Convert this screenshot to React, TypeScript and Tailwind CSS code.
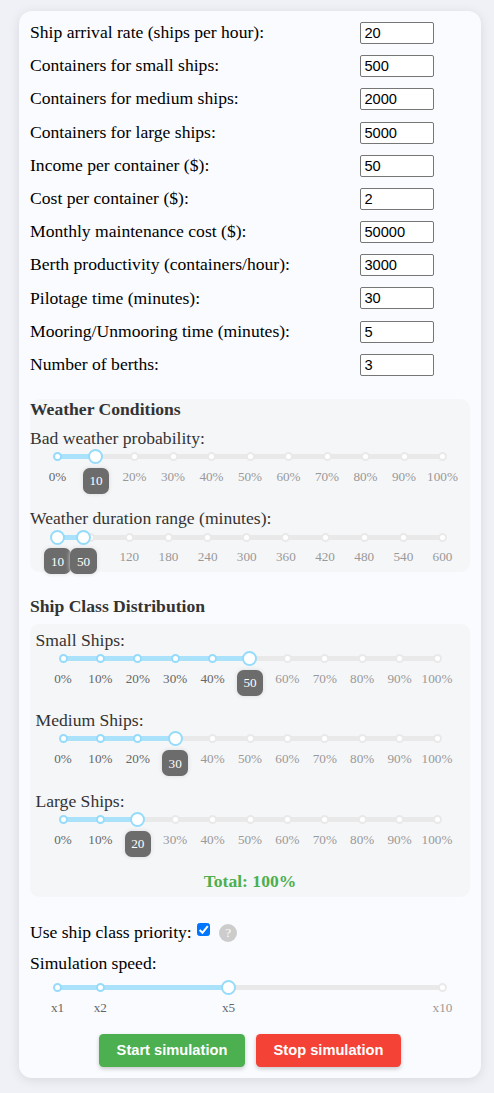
import React, { useState } from "react";

type Mark = { at: number; label: string };

const fields: { label: string; value: string }[] = [
  { label: "Ship arrival rate (ships per hour):", value: "20" },
  { label: "Containers for small ships:", value: "500" },
  { label: "Containers for medium ships:", value: "2000" },
  { label: "Containers for large ships:", value: "5000" },
  { label: "Income per container ($):", value: "50" },
  { label: "Cost per container ($):", value: "2" },
  { label: "Monthly maintenance cost ($):", value: "50000" },
  { label: "Berth productivity (containers/hour):", value: "3000" },
  { label: "Pilotage time (minutes):", value: "30" },
  { label: "Mooring/Unmooring time (minutes):", value: "5" },
  { label: "Number of berths:", value: "3" },
];

const percentMarks: Mark[] = [0, 10, 20, 30, 40, 50, 60, 70, 80, 90, 100].map((n) => ({
  at: n,
  label: `${n}%`,
}));

const minuteMarks: Mark[] = [10, 60, 120, 180, 240, 300, 360, 420, 480, 540, 600].map((n) => ({
  at: n,
  label: `${n}`,
}));

const speedMarks: Mark[] = [1, 2, 5, 10].map((n) => ({ at: n, label: `x${n}` }));

type SliderProps = {
  min: number;
  max: number;
  values: number[];
  marks: Mark[];
  tooltip?: boolean;
};

function Slider({ min, max, values, marks, tooltip = true }: SliderProps) {
  const pos = (n: number) => `${((n - min) / (max - min)) * 100}%`;
  const from = values.length > 1 ? values[0] : min;
  const to = values[values.length - 1];
  // A tooltip hides the mark label underneath it.
  const covered = (n: number) =>
    tooltip && values.some((v) => Math.abs(v - n) / (max - min) < 0.05);
  return (
    <div className="relative h-[5px] w-full rounded-full bg-[#e9e9e9]">
      <div
        className="absolute top-0 h-[5px] rounded-full bg-[#abe2fb]"
        style={{ left: pos(from), width: `${((to - from) / (max - min)) * 100}%` }}
      />
      {marks.map((m) => (
        <React.Fragment key={m.at}>
          <span
            className={`absolute -top-[2px] -ml-[4.5px] size-[9px] rounded-full border-2 bg-white ${
              m.at >= from && m.at <= to ? "border-[#96dbfa]" : "border-[#e9e9e9]"
            }`}
            style={{ left: pos(m.at) }}
          />
          {!covered(m.at) && (
            <span
              className={`absolute top-[14.8px] -translate-x-1/2 text-[13.2px] leading-[15px] whitespace-nowrap ${
                m.at >= from && m.at <= to ? "text-[#666]" : "text-[#999]"
              }`}
              style={{ left: pos(m.at) }}
            >
              {m.label}
            </span>
          )}
        </React.Fragment>
      ))}
      {values.map((v) => (
        <React.Fragment key={v}>
          <span
            className="absolute -top-[5px] -ml-[7.6px] size-[15px] rounded-full border-2 border-[#96dbfa] bg-white"
            style={{ left: pos(v) }}
          />
          {tooltip && (
            <span
              className="absolute top-[13.9px] -ml-[13.2px] flex h-[26px] w-[26.4px] items-center justify-center rounded-[6.6px] bg-[#6c6c6c] text-[13.2px] leading-[15px] text-white shadow-[0_0_4px_#d9d9d9]"
              style={{ left: pos(v) }}
            >
              {v}
            </span>
          )}
        </React.Fragment>
      ))}
    </div>
  );
}

function ShipClass({ label, value }: { label: string; value: number }) {
  return (
    <div className="h-[80.5px]">
      <div className="h-[26px] pl-[5.5px] leading-[20px]">{label}</div>
      <div className="px-[33px]">
        <Slider min={0} max={100} values={[value]} marks={percentMarks} />
      </div>
    </div>
  );
}

export default function App() {
  const [priority, setPriority] = useState(true);
  return (
    <div className="h-[1093px] bg-[#f0f1f6] pt-[11px] pr-[13px] pl-[19px] font-['Liberation_Serif',serif] text-[17.6px] leading-5 text-black">
      <div className="h-[1067px] rounded-[13px] bg-[#fafbfe] px-[11px] pt-[5.4px] shadow-[0_2px_12px_rgba(0,0,0,0.1)]">
        {fields.map((f) => (
          <label key={f.label} className="flex h-[33.2px] items-center">
            <span className="w-[330px] pb-[1.8px]">{f.label}</span>
            <input
              type="text"
              defaultValue={f.value}
              className="h-[22px] w-[74px] rounded-[2px] border border-[#767676] bg-white px-[3.4px] font-['Liberation_Sans',sans-serif] text-[14.67px]"
            />
          </label>
        ))}

        <section className="mt-[17.4px] h-[173px] rounded-[9px] bg-[#f5f6f8] text-[#333]">
          <h3 className="h-[29px] font-bold">Weather Conditions</h3>
          <div className="h-[26px]">Bad weather probability:</div>
          <div className="h-[53.7px] px-[27.5px]">
            <Slider min={0} max={100} values={[10]} marks={percentMarks} />
          </div>
          <div className="h-[27px]">Weather duration range (minutes):</div>
          <div className="px-[27.5px]">
            <Slider min={10} max={600} values={[10, 50]} marks={minuteMarks} />
          </div>
        </section>

        <h3 className="mt-[24px] h-[28px] font-bold text-[#333]">Ship Class Distribution</h3>
        <section className="h-[273.5px] rounded-[9px] bg-[#f5f6f8] pt-[6px] text-[#333]">
          <ShipClass label="Small Ships:" value={50} />
          <ShipClass label="Medium Ships:" value={30} />
          <ShipClass label="Large Ships:" value={20} />
          <div className="text-center font-bold text-[#4caf50]">Total: 100%</div>
        </section>

        <div className="mt-[24.5px] flex h-[31px] items-start">
          <label htmlFor="priority">Use ship class priority:</label>
          <span className="relative mt-[1px] ml-[5px] flex size-[13.5px] shrink-0">
            <input
              id="priority"
              type="checkbox"
              checked={priority}
              onChange={(e) => setPriority(e.target.checked)}
              className="size-full appearance-none rounded-[2.5px] border border-[#767676] bg-white checked:border-[#0075ff] checked:bg-[#0075ff]"
            />
            {priority && (
              <svg
                viewBox="0 0 14 14"
                className="pointer-events-none absolute inset-0 size-full"
                fill="none"
                stroke="white"
                strokeWidth="2.1"
              >
                <path d="M2.7 7.2 L5.7 10.1 L11.2 3.2" />
              </svg>
            )}
          </span>
          <span className="mt-[2px] ml-[9px] flex size-[18px] items-center justify-center rounded-full bg-[#ccc] text-[13.2px] text-white">
            ?
          </span>
        </div>
        <div className="h-[32px]">Simulation speed:</div>
        <div className="h-[49px] px-[27.5px]">
          <Slider min={1} max={10} values={[5]} marks={speedMarks} tooltip={false} />
        </div>
        <div className="flex justify-center gap-[11px] font-['Liberation_Sans',sans-serif] text-[14.67px] font-bold text-white">
          <button className="h-[33px] w-[146px] rounded-[4.4px] bg-[#4caf50] shadow-[0_2px_4px_rgba(0,0,0,0.2)]">
            Start simulation
          </button>
          <button className="h-[33px] w-[145px] rounded-[4.4px] bg-[#f44336] shadow-[0_2px_4px_rgba(0,0,0,0.2)]">
            Stop simulation
          </button>
        </div>
      </div>
    </div>
  );
}
